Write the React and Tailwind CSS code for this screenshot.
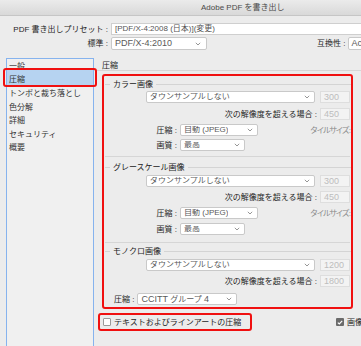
import React from 'react';

const Chevron = () => (
  <svg width="6" height="4" viewBox="0 0 6 4" className="shrink-0">
    <path d="M0.8 0.8 L3 3 L5.2 0.8" fill="none" stroke="#8a8a8a" strokeWidth="0.9" />
  </svg>
);

const Select = ({ w, children }) => (
  <div className={`flex h-[12px] shrink-0 items-center justify-between rounded-[2px] border border-[#c9c9c9] bg-white pl-[3px] pr-[4px] text-[#5a5a5a] ${w}`}>
    <span className="truncate leading-none">{children}</span>
    <Chevron />
  </div>
);

const Dim = ({ children }) => (
  <div className="flex h-[12px] w-[30px] shrink-0 items-center border border-[#dedede] bg-[#f3f3f3] pl-[3px] text-[9px] leading-none text-[#bdbdbd]">
    {children}
  </div>
);

const GroupTitle = ({ children, className }) => (
  <div className={`flex h-[12px] items-center pl-[1px] ${className}`}>
    <div className="h-px w-[5px] bg-[#d4d4d4]" />
    <span className="px-[3px] pt-[1px] leading-none text-[#222]">{children}</span>
    <div className="h-px flex-1 bg-[#d4d4d4]" />
  </div>
);

const Threshold = ({ value, className }) => (
  <div className={`flex h-[12px] items-center justify-end pr-[1px] ${className}`}>
    <span className="mr-[3px] whitespace-nowrap pt-[1px] leading-none text-[#1f1f1f]">次の解像度を超える場合 :</span>
    <Dim>{value}</Dim>
  </div>
);

const Downsample = ({ value, className }) => (
  <div className={`flex h-[12px] items-center pl-[42px] pr-[1px] ${className}`}>
    <Select w="w-[169px]">ダウンサンプルしない</Select>
    <div className="ml-auto">
      <Dim>{value}</Dim>
    </div>
  </div>
);

const Compress = ({ className }) => (
  <div className={`flex h-[12px] items-center ${className}`}>
    <span className="w-[73px] shrink-0 pt-[1px] text-right leading-none text-[#1f1f1f]">圧縮 :</span>
    <div className="ml-[3px]">
      <Select w="w-[78px]">自動 (JPEG)</Select>
    </div>
    <span className="ml-[52px] whitespace-nowrap pt-[1px] tracking-[-1.6px] leading-none text-[#8a8a8a]">タイルサイズ :</span>
  </div>
);

const Quality = ({ className }) => (
  <div className={`flex h-[12px] items-center ${className}`}>
    <span className="w-[73px] shrink-0 pt-[1px] text-right leading-none text-[#1f1f1f]">画質 :</span>
    <div className="ml-[3px]">
      <Select w="w-[65px]">最高</Select>
    </div>
  </div>
);

const navItems = ['トンボと裁ち落とし', '色分解', '詳細', 'セキュリティ', '概要'];

export default function App() {
  return (
    <div className="relative h-[346px] w-[361px] overflow-hidden bg-[#ececec] font-['Liberation_Sans','Noto_Sans_CJK_JP',sans-serif] text-[8px]">
      {/* title bar */}
      <div className="flex h-[16px] w-[476px] items-center border-b border-[#c6c6c6] bg-gradient-to-b from-[#ebebeb] to-[#d9d9d9] pl-[201px] text-[8px] text-[#4a4a4a]">
        <span className="whitespace-nowrap leading-none">Adobe PDF を書き出し</span>
      </div>

      {/* preset */}
      <div className="mt-[7px] flex h-[12px] w-max items-center">
        <span className="flex w-[111px] shrink-0 justify-end whitespace-nowrap pr-[3px] pt-[1px] leading-none text-[#1f1f1f]">PDF 書き出しプリセット :</span>
        <div className="flex h-[12px] w-[300px] shrink-0 items-center border border-[#cfcfcf] bg-white pl-[3px] leading-none text-[#555]">
          [PDF/X-4:2008 (日本)](変更)
        </div>
      </div>

      {/* standard / compatibility */}
      <div className="mt-[2px] flex h-[13px] w-max items-center">
        <span className="flex w-[111px] shrink-0 justify-end whitespace-nowrap pr-[3px] pt-[1px] leading-none text-[#1f1f1f]">標準 :</span>
        <div className="flex h-[13px] w-[96px] shrink-0 items-center justify-between rounded-[2px] border border-[#c9c9c9] bg-white pl-[3px] pr-[5px] text-[9px] leading-none text-[#5a5a5a]">
          PDF/X-4:2010
          <Chevron />
        </div>
        <span className="ml-[110px] shrink-0 whitespace-nowrap pt-[1px] leading-none text-[#1f1f1f]">互換性 :</span>
        <div className="ml-[3px] flex h-[13px] w-[60px] shrink-0 items-center rounded-[2px] border border-[#c9c9c9] bg-white pl-[2px] text-[9px] leading-none text-[#5a5a5a]">
          Acrobat 7
        </div>
      </div>

      {/* main */}
      <div className="mt-[8px] flex">
        {/* left nav */}
        <div className="relative z-10 ml-[6px] h-[300px] w-[88px] shrink-0 border border-[#86b3ee] bg-[#f0f0f0] text-[#333]">
          <div className="flex h-[11px] items-center pl-[2px] pt-[4px] leading-none">一般</div>
          <div className="relative flex h-[15px] items-center bg-[#b6d3f1] pl-[2px] pt-[4px] leading-none">
            圧縮
            <div className="absolute -inset-x-[4px] -inset-y-[2px] rounded-[3px] border-2 border-[#f01010]" />
          </div>
          <div className="mt-[1.5px]">
            {navItems.map((item) => (
              <div key={item} className="flex h-[13.5px] items-center whitespace-nowrap pl-[2px] pt-[2px] leading-none">
                {item}
              </div>
            ))}
          </div>
        </div>

        {/* right content */}
        <div className="flex-1">
          <div className="ml-[3px] flex h-[13px] items-center border-b border-[#d6d6d6] pl-[5px] pt-[4px] leading-none text-[#1f1f1f]">
            圧縮
          </div>

          <div className="ml-[8px] mt-[3px] h-[235px] w-[251px] rounded-[3px] border-2 border-[#f01010] pt-[2px]">
            {/* color */}
            <GroupTitle>カラー画像</GroupTitle>
            <Downsample value="300" className="mt-[1px]" />
            <Threshold value="450" className="mt-[5px]" />
            <Compress className="mt-[4px]" />
            <Quality className="mt-[3px]" />
            <div className="mx-[1px] mt-[5px] h-px bg-[#d6d6d6]" />

            {/* grayscale */}
            <GroupTitle className="mt-[4px]">グレースケール画像</GroupTitle>
            <Downsample value="300" className="mt-[2px]" />
            <Threshold value="450" className="mt-[4px]" />
            <Compress className="mt-[4px]" />
            <Quality className="mt-[4px]" />
            <div className="mx-[1px] mt-[7px] h-px bg-[#d6d6d6]" />

            {/* mono */}
            <GroupTitle className="mt-[2px]">モノクロ画像</GroupTitle>
            <Downsample value="1200" className="mt-[2px]" />
            <Threshold value="1800" className="mt-[4px]" />
            <div className="mt-[6px] flex h-[12px] items-center pl-[10px]">
              <span className="pt-[1px] leading-none text-[#1f1f1f]">圧縮 :</span>
              <div className="ml-[3px]">
                <Select w="w-[100px]">
                  <span className="text-[9px]">CCITT</span> グループ <span className="text-[9px]">4</span>
                </Select>
              </div>
            </div>
          </div>

          {/* checkboxes */}
          <div className="mt-[4px] flex w-max items-center">
            <div className="ml-[4px] flex h-[18px] w-[154px] shrink-0 items-center rounded-[3px] border-2 border-[#f01010] pl-[3px]">
              <div className="h-[8px] w-[8px] rounded-[1px] border border-[#9a9a9a] bg-white" />
              <span className="ml-[3px] whitespace-nowrap pt-[1px] leading-none text-[#1f1f1f]">テキストおよびラインアートの圧縮</span>
            </div>
            <div className="ml-[84px] flex h-[8px] w-[8px] shrink-0 items-center justify-center rounded-[1px] bg-[#6b6b6b]">
              <svg width="6" height="5" viewBox="0 0 6 5">
                <path d="M0.8 2.6 L2.3 4 L5.2 0.9" fill="none" stroke="#fff" strokeWidth="1.1" />
              </svg>
            </div>
            <span className="ml-[3px] whitespace-nowrap pt-[1px] leading-none text-[#1f1f1f]">画像</span>
          </div>
        </div>
      </div>
    </div>
  );
}
